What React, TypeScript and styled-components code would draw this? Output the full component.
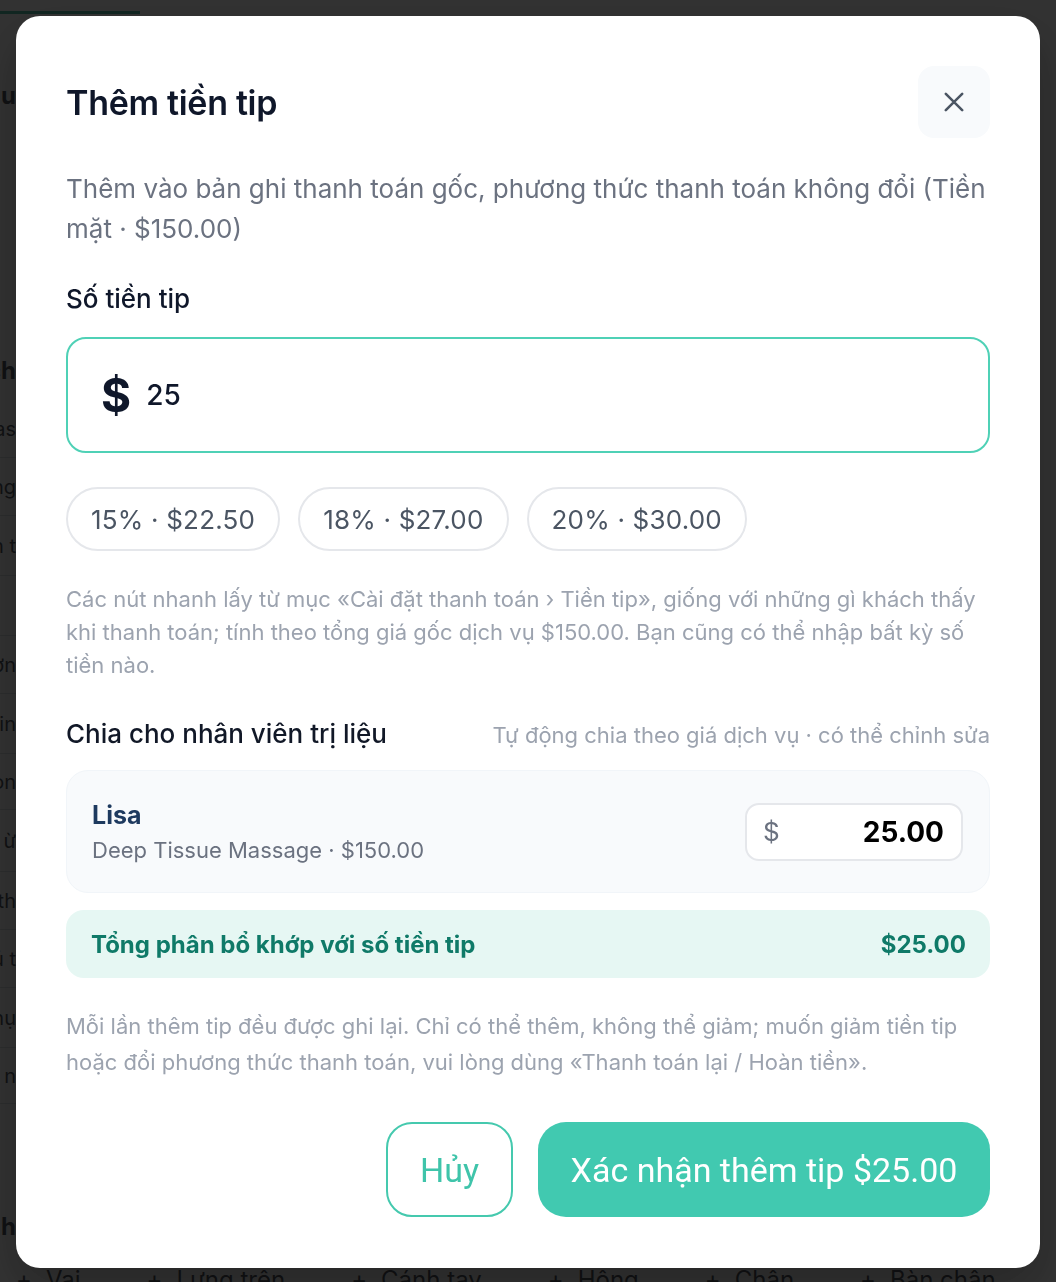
import React from "react";
import styled, { createGlobalStyle } from "styled-components";

const Global = createGlobalStyle`
  html, body { margin: 0; padding: 0; }
  body {
    font-family: Inter, "Noto Sans", sans-serif;
    background: #ffffff;
    width: 1056px;
    height: 1282px;
    overflow: hidden;
  }
  * { box-sizing: border-box; }
`;

/* ---------- background page ---------- */
const Page = styled.div`
  width: 1056px;
  height: 1282px;
  overflow: hidden;
  display: flex;
  flex-direction: column;
  font-family: Inter, sans-serif;
  color: #111827;
`;

const TopBar = styled.div`
  height: 40px;
  display: flex;
  align-items: flex-start;
`;

const TabLine = styled.div`
  width: 140px;
  height: 14px;
  border-bottom: 3px solid #1ba88a;
`;

const SideList = styled.div`
  display: flex;
  flex-direction: column;
  margin-left: -120px;
  width: 136px;
`;

const SideRow = styled.div<{ $h: number; $bold?: boolean; $line?: boolean }>`
  height: ${(p) => p.$h}px;
  display: flex;
  align-items: center;
  justify-content: flex-end;
  font-size: ${(p) => (p.$bold ? 24 : 20)}px;
  font-weight: ${(p) => (p.$bold ? 700 : 400)};
  white-space: nowrap;
  border-bottom: ${(p) => (p.$line ? "1px solid #d1d5db" : "none")};
`;

const BottomChips = styled.div`
  margin-top: auto;
  display: flex;
  gap: 66px;
  padding: 0 0 0 16px;
  height: 14px;
  font-size: 24px;
  color: #111827;
  white-space: nowrap;
  line-height: 24px;
`;

const BottomChip = styled.span`
  display: flex;
  gap: 14px;
`;

const Overlay = styled.div`
  position: fixed;
  inset: 0;
  background: rgba(18, 18, 18, 0.86);
  display: flex;
  align-items: flex-start;
  justify-content: center;
  padding-top: 16px;
`;

/* ---------- modal ---------- */
const Modal = styled.div`
  width: 1024px;
  height: 1252px;
  background: #ffffff;
  border-radius: 24px;
  padding: 50px 50px 51px 50px;
  display: flex;
  flex-direction: column;
  box-shadow: 0 20px 50px rgba(0, 0, 0, 0.25);
`;

const Header = styled.div`
  display: flex;
  align-items: center;
  justify-content: space-between;
  height: 72px;
`;

const Title = styled.h2`
  margin: 0;
  font-size: 34px;
  font-weight: 600;
  color: #0f172a;
  letter-spacing: -0.3px;
`;

const CloseBtn = styled.button`
  width: 72px;
  height: 72px;
  border: none;
  border-radius: 16px;
  background: #f8fafc;
  display: flex;
  align-items: center;
  justify-content: center;
  color: #4b5563;
  padding: 0;
  cursor: pointer;
`;

const Desc = styled.p`
  margin: 31px 0 0;
  font-size: 26px;
  line-height: 40px;
  color: #6b7280;
`;

const Label = styled.div`
  margin-top: 33px;
  font-size: 26px;
  line-height: 34px;
  color: #0f172a;
  font-weight: 500;
`;

const AmountBox = styled.div`
  margin-top: 21px;
  height: 116px;
  flex-shrink: 0;
  border: 2px solid #4fd1b6;
  border-radius: 20px;
  display: flex;
  align-items: center;
  padding: 0 33px;
  gap: 15px;
`;

const BigDollar = styled.span`
  font-size: 46px;
  font-weight: 700;
  color: #0f172a;
`;

const AmountValue = styled.span`
  font-size: 28px;
  font-weight: 500;
  color: #0f172a;
`;

const ChipRow = styled.div`
  margin-top: 34px;
  display: flex;
  gap: 18px;
`;

const Chip = styled.button`
  height: 64px;
  padding: 0 23px;
  border: 2px solid #e5e7eb;
  border-radius: 32px;
  background: #ffffff;
  font-family: Inter, sans-serif;
  font-size: 26px;
  color: #4b5563;
  letter-spacing: 0.2px;
`;

const Help = styled.p<{ $lh: number; $mt: number }>`
  margin: ${(p) => p.$mt}px 0 0;
  font-size: 22px;
  line-height: ${(p) => p.$lh}px;
  color: #9ca3af;
`;

const SectionHead = styled.div`
  margin-top: 36px;
  display: flex;
  align-items: baseline;
  justify-content: space-between;
  line-height: 32px;
`;

const SectionTitle = styled.div`
  font-size: 26px;
  color: #111827;
  font-weight: 500;
`;

const SectionNote = styled.div`
  font-size: 22px;
  color: #9ca3af;
`;

const StaffCard = styled.div`
  margin-top: 19px;
  height: 123px;
  flex-shrink: 0;
  background: #f8fafc;
  border: 1px solid #f1f5f9;
  border-radius: 22px;
  display: flex;
  align-items: center;
  justify-content: space-between;
  padding: 0 26px 0 25px;
`;

const StaffInfo = styled.div`
  display: flex;
  flex-direction: column;
  gap: 6px;
`;

const StaffName = styled.div`
  font-size: 25px;
  line-height: 30px;
  font-weight: 700;
  color: #1e3a5f;
`;

const StaffSub = styled.div`
  font-size: 22px;
  line-height: 28px;
  color: #6b7280;
`;

const SplitInput = styled.div`
  width: 218px;
  height: 58px;
  background: #ffffff;
  border: 2px solid #e5e7eb;
  border-radius: 14px;
  display: flex;
  align-items: center;
  justify-content: space-between;
  padding: 0 17px 0 16px;
`;

const SmallDollar = styled.span`
  font-size: 26px;
  color: #6b7280;
`;

const SplitValue = styled.span`
  font-size: 28px;
  font-weight: 700;
  color: #000000;
`;

const SumBar = styled.div`
  margin-top: 17px;
  height: 68px;
  flex-shrink: 0;
  border-radius: 18px;
  background: #e6f7f3;
  display: flex;
  align-items: center;
  justify-content: space-between;
  padding: 0 24px 0 25px;
  font-size: 24px;
  font-weight: 700;
  color: #0f7a68;
`;

const Actions = styled.div`
  margin-top: auto;
  display: flex;
  justify-content: flex-end;
  gap: 25px;
`;

const GhostBtn = styled.button`
  width: 127px;
  height: 95px;
  border: 2px solid #45c9ae;
  border-radius: 26px;
  background: #ffffff;
  color: #3fc4aa;
  font-family: Roboto, sans-serif;
  font-size: 34px;
`;

const PrimaryBtn = styled.button`
  width: 452px;
  height: 95px;
  border: none;
  border-radius: 28px;
  background: #41c9b0;
  color: #ffffff;
  font-family: Roboto, sans-serif;
  font-size: 34px;
`;

const sideRows: { h: number; t: string; bold?: boolean; line?: boolean }[] = [
  { h: 110, t: "Trạng thái nhu", bold: true },
  { h: 190, t: "" },
  { h: 60, t: "Thông tin khách", bold: true },
  { h: 58, t: "Tên khách · Xu as", line: true },
  { h: 58, t: "Số điện thoại lưng", line: true },
  { h: 60, t: "Thời gian đặt lịch t", line: true },
  { h: 60, t: "", line: true },
  { h: 58, t: "Dịch vụ ơn", line: true },
  { h: 60, t: "Nhân viên in", line: true },
  { h: 56, t: "Phòng on", line: true },
  { h: 62, t: "Vùng ừ", line: true },
  { h: 58, t: "Thời gian th", line: true },
  { h: 58, t: "Ghi chú t", line: true },
  { h: 60, t: "Dịch vụ nụ", line: true },
  { h: 56, t: "Thanh toán n", line: true },
  { h: 92, t: "" },
  { h: 60, t: "Vùng cần tránh", bold: true },
];

const bottom = ["Vai", "Lưng trên", "Cánh tay", "Hông", "Chân", "Bàn chân"];

export default function App() {
  return (
    <>
      <Global />
      <Page>
        <TopBar>
          <TabLine />
        </TopBar>
        <SideList>
          {sideRows.map((r, i) => (
            <SideRow key={i} $h={r.h} $bold={r.bold} $line={r.line}>
              {r.t}
            </SideRow>
          ))}
        </SideList>
        <BottomChips>
          {bottom.map((b) => (
            <BottomChip key={b}>
              <span>+</span>
              <span>{b}</span>
            </BottomChip>
          ))}
        </BottomChips>
      </Page>
      <Overlay>
        <Modal>
          <Header>
            <Title>Thêm tiền tip</Title>
            <CloseBtn aria-label="Đóng">
              <svg width="28" height="28" viewBox="0 0 24 24" fill="none" stroke="currentColor" strokeWidth="2.2" strokeLinecap="round">
                <path d="M5 5 L19 19 M19 5 L5 19" />
              </svg>
            </CloseBtn>
          </Header>
          <Desc>
            Thêm vào bản ghi thanh toán gốc, phương thức thanh toán không đổi (Tiền mặt · $150.00)
          </Desc>
          <Label>Số tiền tip</Label>
          <AmountBox>
            <BigDollar>$</BigDollar>
            <AmountValue>25</AmountValue>
          </AmountBox>
          <ChipRow>
            <Chip>15% · $22.50</Chip>
            <Chip>18% · $27.00</Chip>
            <Chip>20% · $30.00</Chip>
          </ChipRow>
          <Help $lh={33} $mt={32}>
            Các nút nhanh lấy từ mục «Cài đặt thanh toán › Tiền tip», giống với những gì khách thấy khi thanh toán; tính theo tổng giá gốc dịch vụ $150.00. Bạn cũng có thể nhập bất kỳ số tiền nào.
          </Help>
          <SectionHead>
            <SectionTitle>Chia cho nhân viên trị liệu</SectionTitle>
            <SectionNote>Tự động chia theo giá dịch vụ · có thể chỉnh sửa</SectionNote>
          </SectionHead>
          <StaffCard>
            <StaffInfo>
              <StaffName>Lisa</StaffName>
              <StaffSub>Deep Tissue Massage · $150.00</StaffSub>
            </StaffInfo>
            <SplitInput>
              <SmallDollar>$</SmallDollar>
              <SplitValue>25.00</SplitValue>
            </SplitInput>
          </StaffCard>
          <SumBar>
            <span>Tổng phân bổ khớp với số tiền tip</span>
            <span>$25.00</span>
          </SumBar>
          <Help $lh={36} $mt={30}>
            Mỗi lần thêm tip đều được ghi lại. Chỉ có thể thêm, không thể giảm; muốn giảm tiền tip hoặc đổi phương thức thanh toán, vui lòng dùng «Thanh toán lại / Hoàn tiền».
          </Help>
          <Actions>
            <GhostBtn>Hủy</GhostBtn>
            <PrimaryBtn>Xác nhận thêm tip $25.00</PrimaryBtn>
          </Actions>
        </Modal>
      </Overlay>
    </>
  );
}
